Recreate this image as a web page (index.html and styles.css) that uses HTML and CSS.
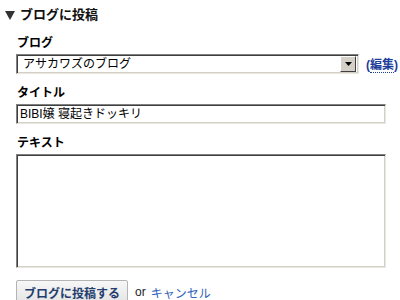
FILE: index.html
```html
<!DOCTYPE html>
<html lang="ja">
<head>
    <meta charset="UTF-8">
    <title>ブログに投稿</title>
    <link rel="stylesheet" href="styles.css">
</head>
<body>
    <div class="post-box">
        <h2 class="post-head">
            <svg class="toggle" width="10" height="9" viewBox="0 0 10 9"><polygon points="0,0 10,0 5,9" fill="#333"/></svg>
            ブログに投稿
        </h2>

        <div class="post-form">
            <label class="field-label">ブログ</label>
            <div class="select-row">
                <div class="fake-select">
                    <span class="select-value">アサカワズのブログ</span>
                    <span class="select-btn">
                        <svg width="7" height="4" viewBox="0 0 7 4"><polygon points="0,0 7,0 3.5,4" fill="#000"/></svg>
                    </span>
                </div>
                <a class="edit-link" href="#">(<span>編集</span>)</a>
            </div>

            <label class="field-label">タイトル</label>
            <div class="text-input">BIBI嬢 寝起きドッキリ</div>

            <label class="field-label">テキスト</label>
            <div class="text-area"></div>

            <div class="actions">
                <button class="submit-btn">ブログに投稿する</button>
                <span class="or">or</span>
                <a class="cancel-link" href="#">キャンセル</a>
            </div>
        </div>
    </div>
</body>
</html>
```

FILE: styles.css
```css
/* base */
body {
    margin: 0;
    background: #fff;
    font-family: "Liberation Sans", "Noto Sans CJK JP", sans-serif;
    font-size: 12px;
    color: #000;
    overflow: hidden;
}

.post-head {
    display: flex;
    align-items: center;
    gap: 5px;
    margin: 0;
    padding: 5px 0 0 5px;
    height: 19px;
    font-size: 13px;
    font-weight: bold;
    line-height: 15px;
    color: #111;
}

.toggle {
    margin-top: 1px;
}

.post-form {
    padding: 11px 0 0 16px;
}

.field-label {
    display: block;
    margin-top: 11px;
    padding-left: 1px;
    font-weight: bold;
    font-size: 12px;
    line-height: 16px;
}

.field-label:first-child {
    margin-top: 0;
}

/* inset boxes */
.fake-select,
.text-input,
.text-area {
    box-sizing: border-box;
    border-top: 1px solid #808080;
    border-left: 1px solid #808080;
    border-right: 1px solid #e8e6e0;
    border-bottom: 1px solid #e8e6e0;
    box-shadow: inset 1px 1px 0 #404040, inset -1px -1px 0 #d4d0c8;
    background: #fff;
}

.select-row {
    display: flex;
    align-items: center;
    gap: 7px;
    margin-top: 3px;
}

.fake-select {
    display: flex;
    align-items: center;
    width: 343px;
    height: 20px;
    padding: 2px 2px 2px 6px;
}

.select-value {
    flex: 1;
    line-height: 14px;
}

.select-btn {
    box-sizing: border-box;
    display: flex;
    align-items: center;
    justify-content: center;
    width: 16px;
    height: 16px;
    background: #d4d0c8;
    border-top: 1px solid #fff;
    border-left: 1px solid #fff;
    border-right: 1px solid #404040;
    border-bottom: 1px solid #404040;
}

.edit-link {
    color: #1a3c9a;
    font-weight: bold;
    font-size: 12px;
    text-decoration: none;
    margin-top: -2px;
}

.edit-link span {
    border-bottom: 1px dotted #1a3c9a;
}

.text-input {
    width: 370px;
    height: 20px;
    margin-top: 3px;
    padding: 2px 3px;
    line-height: 15px;
}

.text-area {
    width: 370px;
    height: 114px;
    margin-top: 3px;
}

.actions {
    display: flex;
    align-items: center;
    gap: 7px;
    margin-top: 12px;
}

.submit-btn {
    height: 24px;
    padding: 1px 7px 0;
    font-family: inherit;
    font-size: 12px;
    font-weight: bold;
    color: #233d6e;
    background: linear-gradient(#f7f7f7, #e4e4e4);
    border: 1px solid #b4b4b4;
    border-radius: 2px;
}

.or {
    color: #222;
}

.cancel-link {
    color: #2f62b8;
    text-decoration: none;
    margin-left: -2px;
}
```
